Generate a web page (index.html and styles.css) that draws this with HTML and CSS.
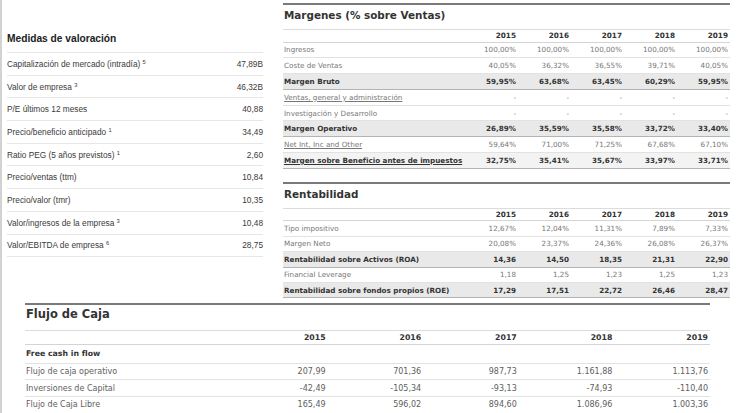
FILE: index.html
```html
<!DOCTYPE html>
<html lang="es">
<head>
<meta charset="utf-8">
<title>Valoración y ratios</title>
<link rel="stylesheet" href="styles.css">
</head>
<body>
<div class="page">
  <div class="top">
    <section class="valuation">
      <h2 class="val-title">Medidas de valoración</h2>
      <div class="val-row"><span>Capitalización de mercado (intradía) <sup>5</sup></span><span>47,89B</span></div>
      <div class="val-row"><span>Valor de empresa <sup>3</sup></span><span>46,32B</span></div>
      <div class="val-row"><span>P/E últimos 12 meses</span><span>40,88</span></div>
      <div class="val-row"><span>Precio/beneficio anticipado <sup>1</sup></span><span>34,49</span></div>
      <div class="val-row"><span>Ratio PEG (5 años previstos) <sup>1</sup></span><span>2,60</span></div>
      <div class="val-row"><span>Precio/ventas (ttm)</span><span>10,84</span></div>
      <div class="val-row"><span>Precio/valor (tmr)</span><span>10,35</span></div>
      <div class="val-row"><span>Valor/ingresos de la empresa <sup>3</sup></span><span>10,48</span></div>
      <div class="val-row"><span>Valor/EBITDA de empresa <sup>6</sup></span><span>28,75</span></div>
    </section>

    <div class="ratios">
      <section class="fin">
        <h2 class="fin-title">Margenes (% sobre Ventas)</h2>
        <table class="fin-table">
          <colgroup><col class="col-label"><col><col><col><col><col></colgroup>
          <thead>
            <tr><th></th><th>2015</th><th>2016</th><th>2017</th><th>2018</th><th>2019</th></tr>
          </thead>
          <tbody>
            <tr><td>Ingresos</td><td>100,00%</td><td>100,00%</td><td>100,00%</td><td>100,00%</td><td>100,00%</td></tr>
            <tr><td>Coste de Ventas</td><td>40,05%</td><td>36,32%</td><td>36,55%</td><td>39,71%</td><td>40,05%</td></tr>
            <tr class="strong"><td>Margen Bruto</td><td>59,95%</td><td>63,68%</td><td>63,45%</td><td>60,29%</td><td>59,95%</td></tr>
            <tr><td><a href="#">Ventas, general y administración</a></td><td>-</td><td>-</td><td>-</td><td>-</td><td>-</td></tr>
            <tr><td>Investigación y Desarrollo</td><td>-</td><td>-</td><td>-</td><td>-</td><td>-</td></tr>
            <tr class="strong"><td>Margen Operativo</td><td>26,89%</td><td>35,59%</td><td>35,58%</td><td>33,72%</td><td>33,40%</td></tr>
            <tr><td><a href="#">Net Int, Inc and Other</a></td><td>59,64%</td><td>71,00%</td><td>71,25%</td><td>67,68%</td><td>67,10%</td></tr>
            <tr class="strong light"><td><a href="#">Margen sobre Beneficio antes de impuestos</a></td><td>32,75%</td><td>35,41%</td><td>35,67%</td><td>33,97%</td><td>33,71%</td></tr>
          </tbody>
        </table>
      </section>

      <section class="fin rent">
        <h2 class="fin-title">Rentabilidad</h2>
        <table class="fin-table">
          <colgroup><col class="col-label"><col><col><col><col><col></colgroup>
          <thead>
            <tr><th></th><th>2015</th><th>2016</th><th>2017</th><th>2018</th><th>2019</th></tr>
          </thead>
          <tbody>
            <tr><td>Tipo impositivo</td><td>12,67%</td><td>12,04%</td><td>11,31%</td><td>7,89%</td><td>7,33%</td></tr>
            <tr><td>Margen Neto</td><td>20,08%</td><td>23,37%</td><td>24,36%</td><td>26,08%</td><td>26,37%</td></tr>
            <tr class="strong"><td>Rentabilidad sobre Activos (ROA)</td><td>14,36</td><td>14,50</td><td>18,35</td><td>21,31</td><td>22,90</td></tr>
            <tr><td>Financial Leverage</td><td>1,18</td><td>1,25</td><td>1,23</td><td>1,25</td><td>1,23</td></tr>
            <tr class="strong"><td>Rentabilidad sobre fondos propios (ROE)</td><td>17,29</td><td>17,51</td><td>22,72</td><td>26,46</td><td>28,47</td></tr>
          </tbody>
        </table>
      </section>
    </div>
  </div>

  <section class="fin flow">
    <h2 class="fin-title flow-title">Flujo de Caja</h2>
    <table class="fin-table flow-table">
      <colgroup><col class="col-label"><col><col><col><col><col></colgroup>
      <thead>
        <tr><th></th><th>2015</th><th>2016</th><th>2017</th><th>2018</th><th>2019</th></tr>
      </thead>
      <tbody>
        <tr class="group"><td>Free cash in flow</td><td></td><td></td><td></td><td></td><td></td></tr>
        <tr><td>Flujo de caja operativo</td><td>207,99</td><td>701,36</td><td>987,73</td><td>1.161,88</td><td>1.113,76</td></tr>
        <tr><td>Inversiones de Capital</td><td>-42,49</td><td>-105,34</td><td>-93,13</td><td>-74,93</td><td>-110,40</td></tr>
        <tr><td>Flujo de Caja Libre</td><td>165,49</td><td>596,02</td><td>894,60</td><td>1.086,96</td><td>1.003,36</td></tr>
      </tbody>
    </table>
  </section>
</div>
</body>
</html>
```

FILE: styles.css
```css
* { box-sizing: border-box; }

html, body {
  margin: 0;
  padding: 0;
  background: #fff;
}

body {
  width: 738px;
  height: 413px;
  overflow: hidden;
  border-left: 2px solid #d2d2d2;
}

.page {
  display: flex;
  flex-direction: column;
}

.top {
  display: flex;
  gap: 20px;
  padding-left: 5px;
  height: 303px;
}

/* ---------- Medidas de valoración ---------- */
.valuation {
  width: 256px;
  padding-top: 31px;
  font-family: "Liberation Sans", Arial, sans-serif;
}

.val-title {
  margin: 0;
  height: 22px;
  line-height: 16px;
  font-size: 10.2px;
  font-weight: bold;
  color: #222;
  border-bottom: 1px solid #e6e6e6;
}

.val-row {
  display: flex;
  justify-content: space-between;
  align-items: center;
  height: 22.7px;
  border-bottom: 1px solid #e6e6e6;
  font-size: 8.3px;
  color: #3a3a3a;
}

.val-row sup {
  font-size: 5.8px;
  line-height: 0;
  vertical-align: 3.5px;
}

/* ---------- Ratio tables ---------- */
.ratios {
  width: 447px;
  padding-top: 3px;
  display: flex;
  flex-direction: column;
  gap: 13px;
}

.fin {
  border-top: 2px solid #7a7a7a;
  font-family: "DejaVu Sans", Verdana, sans-serif;
}

.fin-title {
  margin: 0;
  height: 25px;
  line-height: 20px;
  padding-left: 1px;
  font-size: 10.4px;
  font-weight: bold;
  color: #333;
  border-bottom: 1px solid #dcdcdc;
}

.fin-table {
  width: 100%;
  border-collapse: collapse;
  table-layout: fixed;
}

.fin-table .col-label { width: 182px; }

.fin-table th {
  height: 12px;
  padding: 0 2px 0 0;
  font-size: 7.3px;
  font-weight: bold;
  color: #333;
  text-align: right;
  border-bottom: 1px solid #d4d4d4;
}

.fin-table td {
  height: 15.8px;
  padding: 0 2px 0 1px;
  font-size: 7.2px;
  color: #777;
  text-align: right;
  white-space: nowrap;
  border-bottom: 1px solid #e2e2e2;
}

.fin-table td:first-child { text-align: left; }

.fin-table a {
  color: inherit;
  text-decoration: underline;
}

.fin-table tr.strong td {
  background: #e9e9e9;
  font-weight: bold;
  color: #333;
  border-bottom: 1px solid #b4b4b4;
}

.fin-table tr.strong.light td {
  background: #f3f3f3;
}

.rent .fin-table th { height: 12px; }
.rent .fin-table td { height: 15.4px; }

/* ---------- Flujo de caja ---------- */
.flow {
  margin-left: 23px;
  width: 685px;
}

.flow-title {
  height: 26px;
  line-height: 18px;
  font-size: 11.5px;
}

.flow-table .col-label { width: 207px; }

.flow-table th {
  height: 13px;
  font-size: 7.8px;
}

.flow-table td {
  height: 16.7px;
  font-size: 8px;
  color: #5e5e5e;
}

.flow-table tr.group td {
  height: 19px;
  font-weight: bold;
  font-size: 7.8px;
  color: #333;
}
```
